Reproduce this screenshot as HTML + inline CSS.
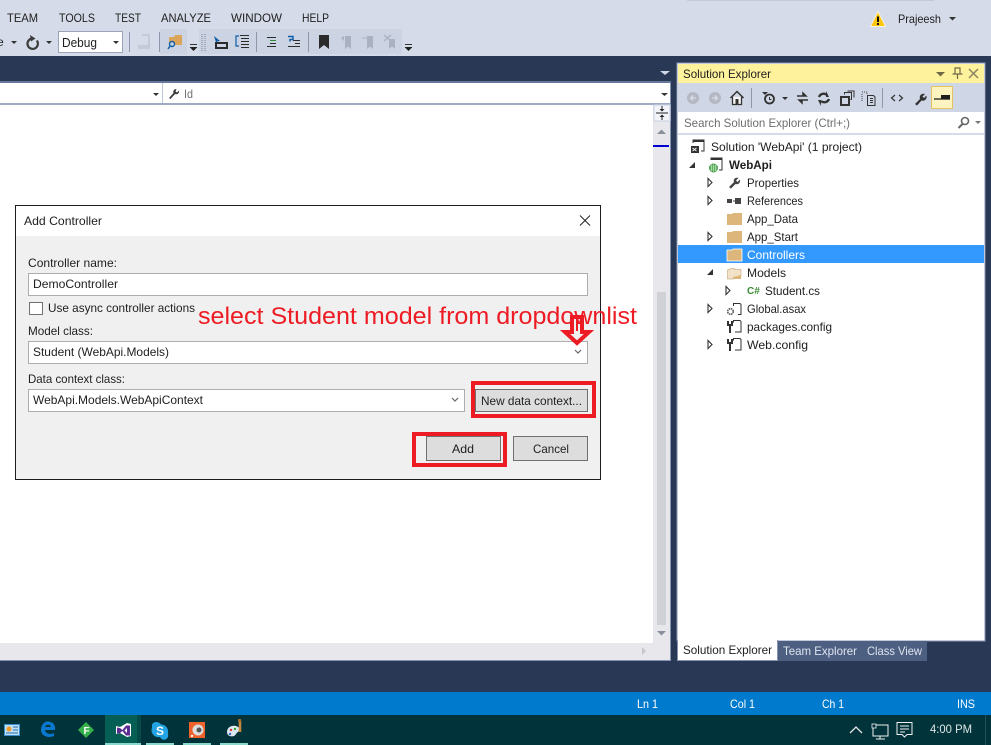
<!DOCTYPE html>
<html><head><meta charset="utf-8"><title>Add Controller</title>
<style>
html,body{margin:0;padding:0;width:991px;height:745px;overflow:hidden;background:#293955}
svg{display:block;position:absolute;left:0;top:0}
text{font-family:"Liberation Sans",sans-serif;font-size:12px;fill:#1e1e1e;white-space:pre}
</style></head><body>
<svg width="991" height="745" viewBox="0 0 991 745" xmlns="http://www.w3.org/2000/svg">
<!-- backgrounds -->
<rect width="991" height="745" fill="#293955"/>
<rect width="991" height="56" fill="#d6dbe9"/>
<rect x="687" y="0" width="247" height="1" fill="#c4c9d6"/>
<rect x="160" y="29" width="27" height="25" fill="#ccd3e2"/>
<rect x="199" y="29" width="203" height="25" fill="#ccd3e2"/>
<!-- menu -->
<text x="7" y="22" textLength="31" lengthAdjust="spacingAndGlyphs">TEAM</text>
<text x="59" y="22" textLength="36" lengthAdjust="spacingAndGlyphs">TOOLS</text>
<text x="115" y="22" textLength="26" lengthAdjust="spacingAndGlyphs">TEST</text>
<text x="161" y="22" textLength="50" lengthAdjust="spacingAndGlyphs">ANALYZE</text>
<text x="231" y="22" textLength="51" lengthAdjust="spacingAndGlyphs">WINDOW</text>
<text x="302" y="22" textLength="27" lengthAdjust="spacingAndGlyphs">HELP</text>
<text x="898" y="23" textLength="43" lengthAdjust="spacingAndGlyphs">Prajeesh</text>
<path d="M949 17h7l-3.500 3.500z" fill="#333"/>
<path d="M870.500 26.500l7.500-15 7.500 15z" fill="#fdc70f" stroke="#fff" stroke-width=".7"/>
<rect x="877" y="16.500" width="2" height="5.500" fill="#111"/><rect x="877" y="23" width="2" height="2" fill="#111"/>
<!-- toolbar -->
<text x="-3" y="46">e</text>
<path d="M11 41h6l-3 3z" fill="#333"/>
<path d="M36.800 40.500a5.200 5.200 0 1 1-4.300-2" fill="none" stroke="#3c3c3c" stroke-width="2.200"/><path d="M30 35l5.500 3.500-4.500 3z" fill="#3c3c3c"/>
<path d="M46 41h6l-3 3z" fill="#333"/>
<rect x="58.500" y="31.500" width="64" height="21" fill="#fff" stroke="#9aa3b8"/>
<text x="62" y="47" textLength="35" lengthAdjust="spacingAndGlyphs" style="font-size:13px">Debug</text>
<path d="M113 41h6l-3 3z" fill="#333"/>
<rect x="129" y="32" width="1" height="20" fill="#8e97ab"/>
<path d="M142 35h7v11h-7" fill="none" stroke="#b4bac8"/><path d="M138 46h12M138 48h12" stroke="#b4bac8"/>
<rect x="159" y="32" width="1" height="20" fill="#8e97ab"/>
<path d="M169 37h5l1-2h7v10h-13z" fill="#dca65a"/>
<circle cx="172" cy="44" r="2.500" fill="#ccd3e2" stroke="#0e5ea8" stroke-width="1.400"/><path d="M170 46l-2 3" stroke="#0e5ea8" stroke-width="1.500"/>
<rect x="190" y="44" width="7" height="1" fill="#333"/><path d="M189.500 47h8l-4 4z" fill="#1e1e1e"/>
<path d="M202 34v18M205 34v18" stroke="#7b8496" stroke-width="1" stroke-dasharray="1 1"/>
<path d="M214 36l6 5-3 .5 0 4z" fill="#0e5ea8"/><path d="M216 43h11v5h-11z" fill="none" stroke="#2b2b2b" stroke-width="2"/>
<path d="M239 36h-3v10h3" fill="none" stroke="#0e5ea8" stroke-width="1.200"/><path d="M240 35.500h9M241 38.500h8M241 41.500h8M241 44.500h8M241 47.500h8" stroke="#2b2b2b"/>
<rect x="256" y="32" width="1" height="20" fill="#8e97ab"/>
<path d="M267 37.500h9M270 43.500h6M267 46.500h9" stroke="#2b2b2b"/><path d="M270 40.500h6" stroke="#2c8c34"/>
<path d="M288 36.500h5v3h-3v2" fill="none" stroke="#0e5ea8" stroke-width="1.500"/><path d="M293 40.500h7M295 43.500h5M288 46.500h12" stroke="#2b2b2b"/>
<rect x="308" y="32" width="1" height="20" fill="#8e97ab"/>
<path d="M319 35h10v14l-5-4-5 4z" fill="#2b2b2b"/>
<path d="M345 36h6v13l-3-2.500-3 2.500z" fill="#aab1c0"/><path d="M341 38l3-2v5z" fill="#aab1c0"/>
<path d="M367 36h6v13l-3-2.500-3 2.500z" fill="#aab1c0"/><path d="M362 38h6v3" fill="none" stroke="#aab1c0"/>
<path d="M389 39h6v10l-3-2.500-3 2.500z" fill="#aab1c0"/><path d="M384 35l7 6M391 35l-7 6" stroke="#aab1c0" stroke-width="1.400"/>
<rect x="405" y="44" width="7" height="1" fill="#333"/><path d="M404.500 47h8l-4 4z" fill="#1e1e1e"/>

<!-- editor -->
<rect x="670" y="83" width="1" height="578" fill="#8592b1"/>
<rect x="0" y="81" width="671" height="2" fill="#65789b"/>
<rect x="0" y="83" width="670" height="20" fill="#fff"/>
<rect x="162" y="83" width="1" height="20" fill="#bcc7d8"/>
<rect x="0" y="103" width="670" height="2" fill="#9eabc4"/>
<path d="M153 93h6l-3 3z" fill="#333"/>
<path d="M661 93h7l-3.500 3z" fill="#333"/>
<path d="M660 71h10l-5 4z" fill="#cfd6e5"/>
<path d="M169 98l4.500-5c-.8-2 .5-4 3-4l-1 2.500 1.500 1 2-2c.5 2.500-1.500 4.500-4 3.500l-4.500 5z" fill="#3a3a3a"/>
<text x="184" y="98" textLength="9" lengthAdjust="spacingAndGlyphs" style="fill:#717171">Id</text>
<rect x="0" y="105" width="653" height="538" fill="#fff"/>
<rect x="653" y="105" width="17" height="555" fill="#e8e8ec"/>
<rect x="0" y="643" width="670" height="17" fill="#e8e8ec"/>
<rect x="0" y="660" width="671" height="1" fill="#8592b1"/>
<rect x="654" y="105" width="16" height="16" fill="#f2f4f9" stroke="#c9d1e2"/>
<path d="M656 113h12" stroke="#222"/><path d="M662 106v4M662 116v4" stroke="#222"/><path d="M659.500 109h5l-2.500 2.500zM659.500 117h5l-2.500-2.500z" fill="#222"/>
<path d="M657 134l4.500-4.500 4.500 4.500z" fill="#8a8f9c"/>
<rect x="653" y="145" width="16" height="2" fill="#0000d0"/>
<rect x="657" y="292" width="9" height="333" fill="#d0d1d7"/>
<path d="M657 631h9l-4.500 4.500z" fill="#8a8f9c"/>
<path d="M642 647v8l4-4z" fill="#c8c8cc"/>

<!-- dialog -->
<rect x="15.500" y="205.500" width="585" height="274" fill="#f0f0f0" stroke="#1c1c1c"/>
<rect x="16" y="206" width="584" height="30" fill="#fff"/>
<text x="24" y="225" textLength="78" lengthAdjust="spacingAndGlyphs">Add Controller</text>
<path d="M580 215.500l10 10M590 215.500l-10 10" stroke="#222" stroke-width="1"/>
<text x="28" y="267" textLength="89" lengthAdjust="spacingAndGlyphs">Controller name:</text>
<rect x="28.500" y="273.500" width="559" height="22" fill="#fff" stroke="#adadad"/>
<text x="33" y="288" textLength="85" lengthAdjust="spacingAndGlyphs">DemoController</text>
<rect x="29.500" y="302.500" width="13" height="12" fill="#fff" stroke="#707070"/>
<text x="48" y="312" textLength="147" lengthAdjust="spacingAndGlyphs">Use async controller actions</text>
<text x="28" y="335" textLength="65" lengthAdjust="spacingAndGlyphs">Model class:</text>
<rect x="28.500" y="341.500" width="559" height="22" fill="#fff" stroke="#adadad"/>
<text x="33" y="356" textLength="136" lengthAdjust="spacingAndGlyphs">Student (WebApi.Models)</text>
<path d="M575 350l3 3 3-3" fill="none" stroke="#666" stroke-width="1.200"/>
<text x="28" y="383" textLength="97" lengthAdjust="spacingAndGlyphs">Data context class:</text>
<rect x="28.500" y="389.500" width="436" height="22" fill="#fff" stroke="#adadad"/>
<text x="33" y="404" textLength="170" lengthAdjust="spacingAndGlyphs">WebApi.Models.WebApiContext</text>
<path d="M452 398l3 3 3-3" fill="none" stroke="#666" stroke-width="1.200"/>
<rect x="475.500" y="389.500" width="112" height="22" fill="#dddddd" stroke="#707070"/>
<text x="481" y="405" textLength="101" lengthAdjust="spacingAndGlyphs">New data context...</text>
<rect x="426.500" y="436.500" width="74" height="24" fill="#dddddd" stroke="#707070"/>
<text x="452" y="453" textLength="22" lengthAdjust="spacingAndGlyphs">Add</text>
<rect x="513.500" y="436.500" width="74" height="24" fill="#dddddd" stroke="#707070"/>
<text x="533" y="453" textLength="36" lengthAdjust="spacingAndGlyphs">Cancel</text>
<!-- annotations -->
<text x="198" y="324" textLength="439" lengthAdjust="spacingAndGlyphs" style="font-size:24px;fill:#ed1c24">select Student model from dropdownlist</text>
<path d="M572 317v15h-7l12 11 12-11h-7v-15z" fill="none" stroke="#ed1c24" stroke-width="4"/>
<rect x="576" y="317" width="2" height="14" fill="#ed1c24"/>
<rect x="473" y="383" width="121" height="33" fill="none" stroke="#ed1c24" stroke-width="4"/>
<rect x="414" y="434" width="91" height="31" fill="none" stroke="#ed1c24" stroke-width="4"/>

<!-- solution explorer -->
<rect x="677" y="63" width="308" height="578" fill="#fff" stroke="#8592b1"/>
<rect x="678" y="64" width="306" height="19" fill="#fff29d"/>
<text x="683" y="78" textLength="88" lengthAdjust="spacingAndGlyphs">Solution Explorer</text>
<path d="M936 72h9l-4.500 4.500z" fill="#6f6a45"/>
<path d="M955 68h5v6h-5zM952.500 74h10M957.500 74v5" fill="none" stroke="#6f6a45" stroke-width="1.200"/>
<path d="M969 69l9 9M978 69l-9 9" stroke="#8a8460" stroke-width="1.500"/>
<rect x="678" y="83" width="306" height="29" fill="#cfd6e5"/>
<circle cx="693" cy="98" r="6" fill="#b3b8c3"/><path d="M696 98h-5M693 95.500l-2.500 2.500 2.500 2.500" fill="none" stroke="#d8dde8" stroke-width="1.300"/>
<circle cx="715" cy="98" r="6" fill="#b3b8c3"/><path d="M712 98h5M715 95.500l2.500 2.500-2.500 2.500" fill="none" stroke="#d8dde8" stroke-width="1.300"/>
<path d="M730.500 98l6.500-6.500 6.500 6.500" fill="none" stroke="#333" stroke-width="1.500"/><path d="M732.500 97v7.500h9v-7.500" fill="#f5f5f5" stroke="#333" stroke-width="1.300"/><rect x="735.500" y="99" width="3" height="5.500" fill="#333"/>
<rect x="751" y="88" width="1" height="20" fill="#8e97ab"/>
<path d="M762 92h6l-3 3z" fill="#333"/><circle cx="769.500" cy="99" r="4.500" fill="none" stroke="#333" stroke-width="1.800"/><path d="M769.500 97v2.500h2" stroke="#333" fill="none"/>
<path d="M782 97h6l-3 3z" fill="#333"/>
<path d="M797 96h9M803 93l3 3-3 0zM808 100h-9M802 103l-3-3 3 0z" stroke="#333" fill="#333" stroke-width="1.500"/>
<path d="M819 97a5 5 0 0 1 8-2M829 99a5 5 0 0 1-8 2" fill="none" stroke="#333" stroke-width="2.400"/><path d="M826 91v6h3zM821 106v-6h-3z" fill="#333"/>
<rect x="841" y="97" width="8" height="8" fill="none" stroke="#333" stroke-width="2"/><path d="M844.500 94.500v-2h7v7h-1M847.500 91h6.500v6.500" fill="none" stroke="#333"/>
<path d="M862 92h5v2M862 94v8" fill="none" stroke="#444" stroke-dasharray="1 1"/><path d="M867.500 95.500h6l1.500 1.500v8.500h-7.500zM870 98.500h3M870 100.500h3M870 102.500h3" fill="none" stroke="#333"/>
<rect x="882" y="88" width="1" height="20" fill="#8e97ab"/>
<path d="M895 95l-3.500 3 3.500 3M899 95l3.500 3-3.500 3" fill="none" stroke="#333" stroke-width="1.200"/>
<path d="M915 104l5-5c-1-3 1-6 5-5l-2.500 2.500 1.500 1.500 2.500-2.500c.8 3.500-2 6-5 5l-4.500 5z" fill="#333"/>
<rect x="931.500" y="86.500" width="21" height="22" fill="#fdf4bf" stroke="#e5c365"/>
<path d="M934 99h16" stroke="#1e1e1e" stroke-width="1.300"/><rect x="941" y="95" width="9" height="4" fill="#1e1e1e"/>
<rect x="679" y="113" width="305" height="20" fill="#fff"/>
<rect x="678" y="133" width="306" height="2" fill="#d6dbe9"/>
<text x="684" y="127" textLength="166" lengthAdjust="spacingAndGlyphs" style="fill:#6d6d6d">Search Solution Explorer (Ctrl+;)</text>
<circle cx="965" cy="121" r="3.500" fill="none" stroke="#666" stroke-width="1.600"/><path d="M962.500 124l-4 4" stroke="#666" stroke-width="2"/>
<path d="M975 121h6l-3 3z" fill="#777"/>

<!-- tree -->
<rect x="678" y="245" width="306" height="18" fill="#3399ff"/>
<text x="711" y="151" textLength="151" lengthAdjust="spacingAndGlyphs">Solution 'WebApi' (1 project)</text>
<text x="729" y="169" textLength="43" lengthAdjust="spacingAndGlyphs" style="font-weight:bold">WebApi</text>
<text x="747" y="187" textLength="52" lengthAdjust="spacingAndGlyphs">Properties</text>
<text x="747" y="205" textLength="56" lengthAdjust="spacingAndGlyphs">References</text>
<text x="747" y="223" textLength="51" lengthAdjust="spacingAndGlyphs">App_Data</text>
<text x="747" y="241" textLength="51" lengthAdjust="spacingAndGlyphs">App_Start</text>
<text x="747" y="259" textLength="58" lengthAdjust="spacingAndGlyphs" style="fill:#fff">Controllers</text>
<text x="747" y="277" textLength="39" lengthAdjust="spacingAndGlyphs">Models</text>
<text x="765" y="295" textLength="55" lengthAdjust="spacingAndGlyphs">Student.cs</text>
<text x="747" y="313" textLength="59" lengthAdjust="spacingAndGlyphs">Global.asax</text>
<text x="747" y="331" textLength="85" lengthAdjust="spacingAndGlyphs">packages.config</text>
<text x="747" y="349" textLength="61" lengthAdjust="spacingAndGlyphs">Web.config</text>
<!-- tree icons -->
<path d="M693 143v-3h11v11h-3" fill="none" stroke="#333"/><rect x="693" y="140" width="11" height="2" fill="#333"/>
<rect x="691" y="146" width="8" height="7" fill="#333"/><path d="M692.500 148l4 3M696.500 148l-4 3" stroke="#fff" stroke-width=".8"/>
<path d="M695 162v6h-6z" fill="#333"/>
<path d="M711 160v-2h11v12h-3" fill="none" stroke="#333"/><rect x="711" y="158" width="11" height="2" fill="#333"/>
<circle cx="713.500" cy="168" r="4.500" fill="#3a9a3a"/><path d="M709.500 168h8M713.500 164v8M711.500 164.500v7M715.500 164.500v7M710 166h7M710 170h7" stroke="#d8f0d8" stroke-width=".6"/>
<g fill="none" stroke="#333" stroke-width="1.100">
<path d="M708 178.500v8l4-4z"/><path d="M708 196.500v8l4-4z"/><path d="M708 232.500v8l4-4z"/>
<path d="M726 286.500v8l4-4z"/><path d="M708 304.500v8l4-4z"/><path d="M708 340.500v8l4-4z"/>
</g>
<path d="M713 269v6h-6z" fill="#333"/>
<path d="M729 187l5-5c-1-2.500 1-5 4.500-4l-2.500 2.500 1.500 1.500 2.500-2.500c.6 3-1.500 5.500-4.500 4.500l-4.500 4.500z" fill="#444"/>
<rect x="727" y="199" width="5" height="4" fill="#444"/><rect x="733" y="200.500" width="2" height="1" fill="#444"/><rect x="735" y="198" width="6" height="6" fill="#444"/>
<path d="M727 214h5l1-1h9v12h-15z" fill="#dcb67a"/>
<path d="M727 232h5l1-1h9v12h-15z" fill="#dcb67a"/>
<path d="M727 250h5l1-1h9v12h-15z" fill="#dcb67a" stroke="#fff" stroke-width=".8"/>
<path d="M727.500 270l4-1.500h3v1h6.500v7l-8 2.500h-5.500z" fill="#f2e2c7" stroke="#c9b28e" stroke-width=".7"/><path d="M733 277l8-2v4h-8z" fill="#dcb67a"/>
<text x="747" y="294" style="font-size:10px;font-weight:bold;fill:#388a34">C#</text>
<g fill="none" stroke="#333" stroke-width="1">
<path d="M733.500 306v-2.500h6.500l1 1v10h-3"/><path d="M733.500 322.500v-2h6.500l1 1v10.500h-6"/><path d="M733.500 340.500v-2h6.500l1 1v10.500h-6"/>
</g>
<circle cx="730.500" cy="311.500" r="2.800" fill="none" stroke="#555" stroke-width="1.600" stroke-dasharray="1.500 .7"/>
<path d="M727 321h2v3h2v-3h2v5h-2v7h-2v-7h-2z" fill="#333"/><path d="M727 339h2v3h2v-3h2v5h-2v7h-2v-7h-2z" fill="#333"/>

<!-- tabs -->
<rect x="677.500" y="640.500" width="100" height="20" fill="#fff" stroke="#8592b1"/>
<rect x="678" y="640" width="99" height="2" fill="#fff"/>
<text x="683" y="654" textLength="89" lengthAdjust="spacingAndGlyphs">Solution Explorer</text>
<rect x="778" y="641" width="149" height="20" fill="#4d6082"/>
<text x="783" y="655" textLength="74" lengthAdjust="spacingAndGlyphs" style="fill:#dfe3ee">Team Explorer</text>
<text x="867" y="655" textLength="55" lengthAdjust="spacingAndGlyphs" style="fill:#dfe3ee">Class View</text>

<!-- status -->
<rect x="0" y="692" width="991" height="23" fill="#007acc"/>
<text x="637" y="708" textLength="21" lengthAdjust="spacingAndGlyphs" style="fill:#fff">Ln 1</text>
<text x="730" y="708" textLength="25" lengthAdjust="spacingAndGlyphs" style="fill:#fff">Col 1</text>
<text x="822" y="708" textLength="22" lengthAdjust="spacingAndGlyphs" style="fill:#fff">Ch 1</text>
<text x="957" y="708" textLength="18" lengthAdjust="spacingAndGlyphs" style="fill:#fff">INS</text>

<!-- taskbar -->
<rect x="0" y="715" width="991" height="30" fill="#00343a"/>
<rect x="105" y="715" width="32" height="30" fill="#065f55"/>
<rect x="137" y="715" width="4" height="30" fill="#064a47"/>
<rect x="105" y="743" width="36" height="2" fill="#8ad8cc"/>
<rect x="146" y="743" width="28" height="2" fill="#8ad8cc"/>
<rect x="183" y="743" width="28" height="2" fill="#8ad8cc"/>
<rect x="220" y="743" width="28" height="2" fill="#8ad8cc"/>
<rect x="4" y="724" width="16" height="12" fill="#3a8fd0"/><rect x="5" y="725" width="14" height="10" fill="#bfe0f5"/>
<circle cx="9" cy="729" r="2.500" fill="#f09a28"/><path d="M13 727h5M13 730h5M6 733h12" stroke="#2a6fb0"/>
<path d="M55 730h-10c.5 4 6 5 9 3v3c-6 2.500-13 0-13-6 0-7 6-10 9-8 4 .5 5.500 4 5 8zM45 727h6c-.5-3-5-3-6 0z" fill="#0b78d0"/>
<path d="M86 722l8 8-8 8-8-8z" fill="#35b04a"/><text x="83.500" y="734" style="font-size:10px;font-weight:bold;fill:#fff">F</text>
<path d="M116 726l4 1 7-4 4 1v12l-4 1-7-4-4 1z" fill="#fff"/><path d="M117 727.500l3 .5 3 2.500-3 2.500-3 .5zM126 725.500l4 0v10l-4 0-4-5z" fill="#5c2d91"/><path d="M127 728v5l-2.500-2.500z" fill="#fff"/>
<path d="M156 722a4 4 0 0 0-4 5c0 1-.5 2-.5 3.500a7 7 0 0 0 8.500 6.500 4 4 0 0 0 8-3c.5-3 0-9-7-9.500a6 6 0 0 0-5-2.500z" fill="#22a3e3"/><text x="156" y="735" style="font-weight:bold;fill:#fff">S</text>
<rect x="189" y="722" width="16" height="16" fill="#f1612c"/><circle cx="198" cy="730" r="5.500" fill="#ddd"/><circle cx="199" cy="730" r="2.500" fill="#555"/><rect x="191" y="735" width="2" height="2" fill="#fff"/>
<path d="M227 732c0-5 5-7 9-6 4 1 4 4 2 6-2 1-2 3-4 4-3 1-7 0-7-4z" fill="#dce8f0"/><circle cx="231" cy="730" r="1.200" fill="#d33"/><circle cx="235" cy="729" r="1.200" fill="#3a3"/><circle cx="230" cy="734" r="1.200" fill="#36c"/>
<path d="M240 720v12" stroke="#c88a3a" stroke-width="2.500"/><rect x="238" y="719" width="3" height="3" fill="#a06a2a"/>
<path d="M850 733l6-6 6 6" fill="none" stroke="#e6e6e6" stroke-width="1.300"/>
<path d="M873 725h15v11h-15zM880 736v3M876 739h9" fill="none" stroke="#f0f0f0"/><rect x="872" y="724" width="4" height="4" fill="#00343a" stroke="#f0f0f0" stroke-width=".8"/>
<path d="M897 722.500h15v12h-5l-2.500 2.500-2.500-2.500h-5z" fill="none" stroke="#f0f0f0"/><path d="M900 726h9M900 729h9M900 732h5" stroke="#f0f0f0"/>
<text x="930" y="733" textLength="42" lengthAdjust="spacingAndGlyphs" style="fill:#dfe6e6">4:00 PM</text>
<rect x="985" y="715" width="1" height="30" fill="#1d5258"/>
</svg>
</body></html>
